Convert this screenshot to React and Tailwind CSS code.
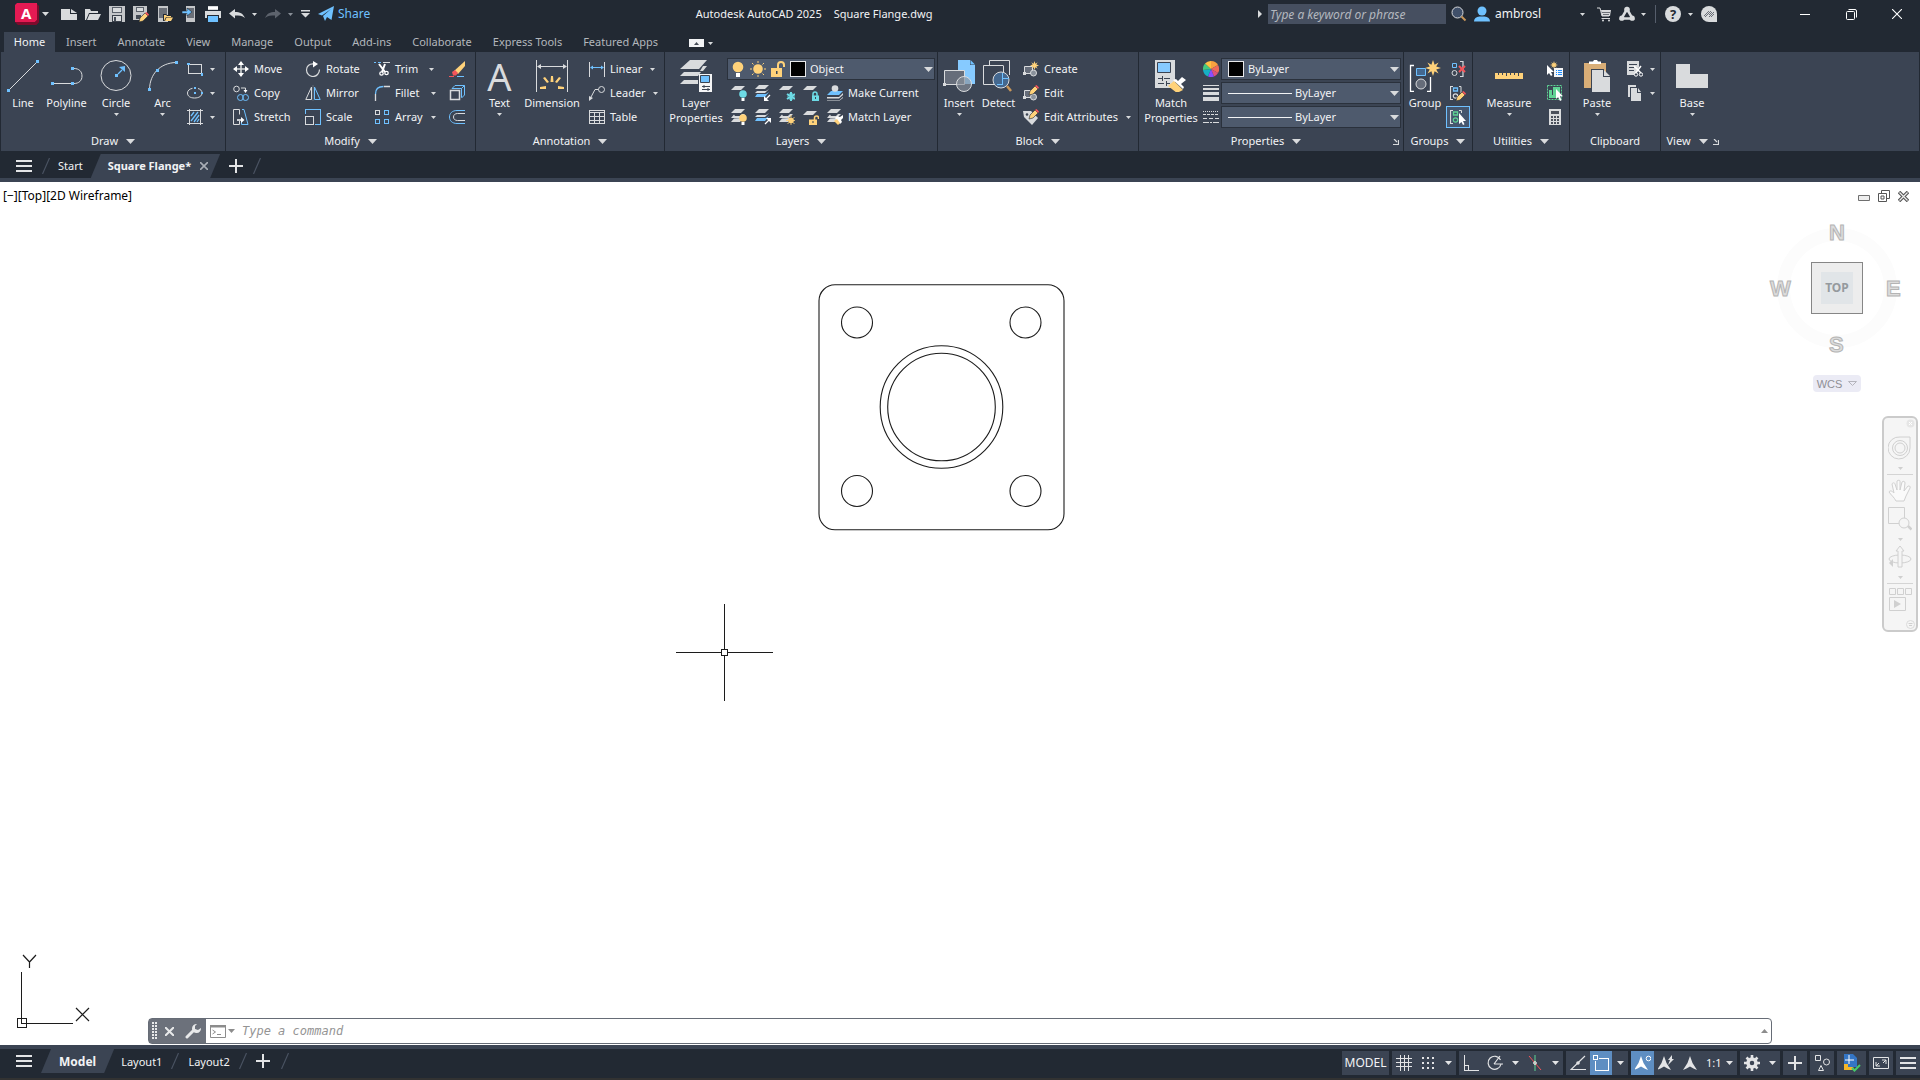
import React from "react";

const L = "#d9dbdd";
const B = "#6fc1ff";
const Y = "#ffd27a";
const C = "#6ddbe6";
const G = "#5fd394";
const R = "#f4555a";
const P = "#3b4453";
const D = "#222933";

function Ico({ w = 16, h = 16, crisp, children }) {
  return (
    <svg width={w} height={h} viewBox={`0 0 ${w} ${h}`} fill="none" stroke="none" className="shrink-0 block" shapeRendering={crisp ? "crispEdges" : undefined} aria-hidden="true">
      {children}
    </svg>
  );
}

const Tri = ({ big, up, color = L }) =>
  big ? (
    <Ico w={9} h={5}><path d={up ? "M0 5h9L4.500 0z" : "M0 0h9L4.500 5z"} fill={color} /></Ico>
  ) : (
    <Ico w={5} h={3}><path d="M0 0h5L2.500 3z" fill={color} /></Ico>
  );

/* ---------- title bar icons ---------- */
const LogoIcon = () => (
  <Ico w={24} h={22}>
    <path d="M3 22h18l3-3V3l-2-2z" fill="#7d0b2c" />
    <path d="M0 2l2-2h20v17l-2 2H0z" fill="#e51a53" />
    <path d="M0 19h20l2-2 2 2-3 3H3z" fill="#7d0b2c" />
  </Ico>
);
const NewIcon = () => <Ico w={17} h={16}><path d="M1 3h9v5h7v6H1zM11 3l6 4h-6z" fill={L} /></Ico>;
const OpenIcon = () => <Ico><path d="M0 14V3h5l1 2h7v2H4L1 14zM4.500 8H16l-3 6H2z" fill={L} /></Ico>;
const SaveIcon = () => (
  <Ico crisp>
    <path d="M0 0h16v16H0z" fill="#c4c6c9" />
    <path d="M3 1h10v6H3z" fill="#5b616b" /><path d="M4 2h8v4H4z" fill={L} />
    <path d="M3 9h10v7H3z" fill="#3b414b" /><path d="M4 10h8v5H4z" fill={L} /><path d="M5 11h2v4H5z" fill="#444b56" />
  </Ico>
);
const Pencil = ({ x = 6, y = 6 }) => (
  <g transform={`translate(${x} ${y})`}>
    <path d="M0 10l1-4 5-5 3 3-5 5z" fill={Y} stroke={D} strokeWidth=".6" />
    <path d="M6 1l1.500-1L10 2.500 9 4z" fill={R} />
  </g>
);
const SaveAsIcon = () => (
  <Ico>
    <path d="M0 0h14v7L8 14H0z" fill="#c4c6c9" /><path d="M3 1h8v5H3z" fill="#5b616b" /><path d="M4 2h6v3H4z" fill={L} /><path d="M3 9h5v4H3z" fill="#444b56" />
    <Pencil />
  </Ico>
);
const OpenMobileIcon = () => (
  <Ico><path d="M1 0h10v16H1z" fill="#c4c6c9" /><path d="M2 2h8v10H2z" fill="#6a6f78" /><path d="M6 15V8h3l1 1h5l1 6z" fill={D} /><path d="M7 15V9h2l1 1h4v1H9zM9.500 11.500H16L14 15H8z" fill={Y} /></Ico>
);
const SaveMobileIcon = () => (
  <Ico><path d="M5 0h9v16H5z" fill="#c4c6c9" /><path d="M6 2h7v10H6z" fill="#6a6f78" /><path d="M1 5h5V2l5 4-5 4V7.500H1z" fill={B} stroke={D} strokeWidth=".6" /></Ico>
);
const PrintIcon = () => (
  <Ico crisp><path d="M3 0h10v4H3zM0 5h16v7h-2V9H2v3H0z" fill={L} /><path d="M3 10h10v6H3z" fill={B} /><path d="M3 1h10v2H3z" fill="#fff" /></Ico>
);
const UndoIcon = ({ color = L }) => <Ico><path d="M0 7.500L6 3v3c5 0 8 1.500 10 6-3-2.500-6-2.500-10-2.500v3z" fill={color} /></Ico>;
const RedoIcon = () => <Ico><path d="M16 7.500L10 3v3C5 6 2 7.500 0 12c3-2.500 6-2.500 10-2.500v3z" fill="#5d636d" /></Ico>;
const CustomizeIcon = () => <Ico w={9} h={8}><path d="M0 0h9v1.500H0zM0 3h9L4.500 7.500z" fill={L} /></Ico>;
const ShareIcon = () => <Ico><path d="M0 8L16 0l-2.500 14-4.500-3L7 15l-2-5 8-7-9 6.500z" fill={B} /></Ico>;
const MagnifierIcon = () => <Ico><circle cx="6.500" cy="6.500" r="5.500" fill="#40506a" stroke={L} /><path d="M10.500 10.500L14.500 14.500" stroke="#c9975a" strokeWidth="2" /></Ico>;
const UserIcon = () => <Ico><circle cx="8" cy="5" r="4.500" fill={B} /><path d="M0 15.500c0-3 2-4.500 5.500-5h5c3.500.5 5.500 2 5.500 5z" fill={B} /></Ico>;
const CartIcon = () => <Ico w={14} h={16}><path d="M0 2h3l2 8h7" stroke={L} /><path d="M4 4h10l-1 6H5z" fill={L} /><path d="M5 6.500h8M6 8.500h6" stroke={D} strokeWidth=".6" /><path d="M4.500 12.500h8.500" stroke={L} /><circle cx="6" cy="14.500" r="1" fill={L} /><circle cx="12" cy="14.500" r="1" fill={L} /></Ico>;
const AppIcon = () => <Ico><path d="M8 3L2.500 12.500h11z" stroke={L} strokeWidth="2.500" /><circle cx="8" cy="3.500" r="2.800" fill={L} /><circle cx="2.800" cy="12.200" r="2.600" fill={L} /><circle cx="13.200" cy="12.200" r="2.600" fill={L} /></Ico>;
const HelpIcon = () => (
  <span className="flex size-4 items-center justify-center rounded-full bg-[#d9dbdd] text-[13px] font-bold leading-4 text-[#222933]">?</span>
);
const FeedbackIcon = () => <Ico><path d="M8 0a8 8 0 0 1 8 8v8H8A8 8 0 0 1 8 0z" fill={L} /><path d="M3 10l5-5M4 11l6-6M8 9l3-3M8 11l5-5M10 11l3-3" stroke="#6a6f78" /></Ico>;

/* ---------- draw / modify ---------- */
const LineIcon = () => <Ico w={32} h={32}><path d="M2 30L30 2" stroke={L} /><path d="M0 29h3v3H0zM29 0h3v3h-3z" fill={B} /></Ico>;
const PolylineIcon = () => <Ico w={32} h={32}><path d="M2 23.500h19M23 8.500c5 0 8 3 8 7.500s-3 7.500-8 7.500" stroke={L} /><path d="M0 22h3v3H0zM20 22h3v3h-3zM20 7h3v3h-3z" fill={B} /></Ico>;
const CircleIcon = () => <Ico w={32} h={32}><circle cx="16" cy="15.500" r="15" stroke={L} /><path d="M15 14h3v3h-3z" fill={B} /><path d="M18 14l4-4" stroke={B} strokeWidth="1.300" /><path d="M25 6v6l-6-5z" fill={B} /></Ico>;
const ArcIcon = () => <Ico w={32} h={32}><path d="M2.500 29C3 14 13 3 29 2.500" stroke={L} /><path d="M1 28h3v3H1zM9 9h3v3H9zM28 1h3v3h-3z" fill={B} /></Ico>;
const RectIcon = () => <Ico crisp><path d="M1.500 3.500h13v9h-13z" stroke={L} /><path d="M0 2h3v2H0zM14 12h2v3h-2z" fill={B} /></Ico>;
const EllipseIcon = () => <Ico><path d="M11 3.500c2.500.7 4 2.200 4 4.500 0 3-3 5-7.500 5S.5 11 .5 8c0-2.500 2-4 5-4.700" stroke={L} /><path d="M7 2h2v2H7zM7 7h2v2H7zM14 7h2v2h-2z" fill={B} /></Ico>;
const HatchIcon = () => <Ico><path d="M0 1.500h16M0 14.500h16M2.500 0v16M13.500 0v16" stroke={L} /><path d="M4 7l3-4M4 12l7-9M7 13l5-7M10 13l2-3" stroke={B} strokeWidth="1.300" /></Ico>;
const MoveIcon = () => <Ico><path d="M8 1v14M1 8h14" stroke={L} strokeWidth="1.500" /><path d="M8 0l3 4H5zM8 16l3-4H5zM0 8l4-3v6zM16 8l-4-3v6z" fill="#fff" /></Ico>;
const CopyIcon = () => <Ico><circle cx="3.500" cy="4" r="2.800" stroke={L} /><path d="M8 3h4.500v4" stroke={L} /><path d="M12.500 8l-2-3h4z" fill="#fff" /><circle cx="7.500" cy="12.500" r="3" stroke={B} /><circle cx="12.500" cy="12.500" r="3" stroke={B} /></Ico>;
const StretchIcon = () => <Ico><path d="M.5 .500h6v5M6.500 12v3.500h-6V.500" stroke={L} /><path d="M9 .500h2L15 15.500H8.500v-5" stroke={B} /><path d="M4 11h5" stroke="#fff" strokeWidth="1.500" /><path d="M11.500 11L8 8v6z" fill="#fff" /></Ico>;
const RotateIcon = () => <Ico><path d="M9 3C4 2.500 1.500 5.500 1.500 9c0 3.500 3 6.500 6.500 6.500s6.500-3 6.500-7" stroke={L} strokeWidth="1.200" /><path d="M8 0l5 3-5 3.500z" fill="#fff" /></Ico>;
const MirrorIcon = () => <Ico><path d="M6.500 2v12.500H.800z" stroke={L} /><path d="M9.500 2v12.500h5.700z" stroke={B} /><path d="M8 0v16" stroke="#8a919d" strokeWidth=".5" /></Ico>;
const ScaleIcon = () => <Ico crisp><path d="M.5 5V.500h15v15H10" stroke={B} /><path d="M.5 7.500h8v8h-8z" stroke={L} /></Ico>;
const TrimIcon = () => <Ico><path d="M0 1.500h2M4 1.500h3" stroke={B} /><path d="M9 1.500h7" stroke={L} /><path d="M5 3l6 8M11 3L8 11" stroke="#fff" strokeWidth="2" /><circle cx="7.500" cy="12.500" r="1.700" stroke="#fff" strokeWidth="1.300" /><circle cx="12.500" cy="12" r="1.700" stroke="#fff" strokeWidth="1.300" /></Ico>;
const FilletIcon = () => <Ico><path d="M1.500 9c0-5 3-7.500 8-7.500" stroke={B} strokeWidth="1.300" /><path d="M10 1.500h6M1.500 9v7" stroke={L} strokeWidth="1.300" /></Ico>;
const ArrayIcon = () => <Ico crisp><path d="M1.500 1.500h4v4h-4z" stroke={L} /><path d="M10.500 1.500h4v4h-4zM1.500 10.500h4v4h-4zM10.500 10.500h4v4h-4z" stroke={B} /></Ico>;
const EraseIcon = () => <Ico><path d="M5 10L16 0v5l-7 8z" fill={Y} /><path d="M3 11l3-2 3 3-2 2.500H4z" fill={R} /><path d="M0 15.500h5" stroke={R} /><path d="M8 15.500h7" stroke={B} /></Ico>;
const ExplodeIcon = () => <Ico><path d="M1.500 5.500h9v9h-9z" stroke={L} strokeWidth="1.500" /><path d="M3 3.500L6 .500h9.500V10l-3 3M12.500 3.500l3-3M12.500 3.500v9M3 3.500h9.500" stroke={B} /></Ico>;
const OffsetIcon = () => <Ico><path d="M16 1.500H8C3 1.500.5 4.500.5 8S3 14.500 8 14.500h8" stroke={B} /><path d="M16 4.500H8.500C6 4.500 4.500 6 4.500 8s1.500 3.500 4 3.500H16" stroke={L} /></Ico>;

/* ---------- annotation ---------- */
const TextIcon = () => (
  <span className="flex h-8 w-8 items-center justify-center text-[38px] font-normal leading-8 text-[#d9dbdd]">A</span>
);
const DimensionIcon = () => (
  <Ico w={32} h={32}><path d="M.5 0v32M31.500 0v32M2 6.500h28" stroke={L} /><path d="M1 6.500L5 4v5zM31 6.500L27 4v5z" fill={L} /><g fill={Y}><path d="M15 16h2l.5 6h-3zM7 18l2-1 4 5-2 1zM25 18l-2-1-4 5 2 1zM4 27l6-1v3H4zM22 26l6 1v2h-6z" /></g></Ico>
);
const LinearIcon = () => <Ico><path d="M.5 1v15M15.500 1v15" stroke={L} /><path d="M2 6.500h12" stroke={B} /><path d="M1 6.500L4 4.500v4zM15 6.500l-3-2v4z" fill={B} /></Ico>;
const LeaderIcon = () => <Ico><circle cx="12.500" cy="4.500" r="3" stroke={L} /><path d="M9.500 4.500H6L1.500 13" stroke={L} /><path d="M0 16v-5l4 2z" fill={L} /></Ico>;
const TableIcon = () => <Ico crisp><path d="M.5 1.500h15v13H.500zM0 3.500h16M0 7.500h16M0 11.500h16M5.500 4v10M10.500 4v10" stroke={L} /></Ico>;

/* ---------- layers ---------- */
const Sheet = ({ y = 0, fill = L }) => <path d={`M4 ${y}h10l-4 4H0z`} fill={fill} />;
const LayerPropsIcon = () => (
  <Ico w={32} h={32}>
    <path d="M10 0h17l-8 9H0zM4 12l-4 4h18l3-4zM4 20l-4 4h18v-4zM23 6h4l-4 5h-3z" fill={L} />
    <path d="M19 14h13v18H19z" fill="#f4f5f6" /><path d="M20.500 15.500h9v7h-9z" fill={B} stroke={P} /><path d="M22 26.500h8M22 29.500h8M24 25v3M28 28v3" stroke={P} />
  </Ico>
);
const Stack = () => <g><Sheet y={0} /><path d="M3 5.500L0 9h10l4-4h-3l-2 2H4zM3 9.500L0 13h9l3-4z" fill={L} /></g>;
const Bulb = ({ c }) => <g><circle cx="12" cy="9" r="3.800" fill={c} /><path d="M10.500 13h3v3h-3z" fill="#fff" /></g>;
const LayOff = () => <Ico><Sheet y={1} /><Bulb c={C} /></Ico>;
const LayOn = () => <Ico><Stack /><Bulb c={Y} /></Ico>;
const Iso = ({ flip }) => (
  <Ico><Sheet y={0} /><path d="M2 6h9l3-2-4 4H0z" fill={L} /><path d="M2 9h9l3-2-4 5H0z" fill={B} /><path d="M10 15l5-5" stroke="#fff" strokeWidth="1.300" />{flip ? <path d="M16 9v5l-5-5z" fill="#fff" /> : <path d="M9 16v-5l5 5z" fill="#fff" />}</Ico>
);
const Freeze = () => <Ico><Sheet y={1} /><path d="M12 7v9M8 9l8 5M16 9l-8 5" stroke={C} strokeWidth="2" /><circle cx="12" cy="11.500" r="3" stroke={C} /></Ico>;
const Thaw = () => <Ico><Stack /><path d="M12 6v11M7 11.500h10M8.500 8l7 7M15.500 8l-7 7" stroke={Y} strokeWidth=".8" /><circle cx="12" cy="11.500" r="2.800" fill={Y} /></Ico>;
const Lock = () => <Ico><Sheet y={1} /><path d="M10 11V9a2 2 0 0 1 4 0v2" stroke={C} strokeWidth="1.500" /><path d="M9 10.500h7V16H9z" fill={C} /><path d="M12 12h1v2h-1z" fill={P} /></Ico>;
const Unlock = () => <Ico><Sheet y={2} /><path d="M11.500 11V9a2 2 0 0 1 4 0v1" stroke={Y} strokeWidth="1.500" /><path d="M6 10.500h8V16H6z" fill={Y} /><path d="M9.500 12h1v2h-1z" fill={P} /></Ico>;
const MakeCurrentIcon = () => <Ico><path d="M4 6h12l-4 4H0z" fill={B} /><circle cx="8" cy="3.500" r="3.300" fill={L} /><path d="M0 12h12l4-4v2l-4 3.500H0zM0 15.500h12l4-3.500v1l-4 3H0z" fill={L} /></Ico>;
const MatchLayerIcon = () => <Ico><Stack /><path d="M8 9l2-2 3 1 3-2v3l-2 2 1 2-2 2z" fill="#fff" /><path d="M7 12l3-2 3 4-2 2z" fill={Y} /></Ico>;
const BulbOn = () => <Ico><circle cx="8" cy="6" r="5.300" fill={Y} /><path d="M6 12h4v4H6z" fill="#fff" /></Ico>;
const SunIcon = () => <Ico><circle cx="8" cy="8" r="4.800" fill={Y} /><path d="M8 0v2M8 14v2M0 8h2M14 8h2M2 2l1.500 1.500M12.500 12.500L14 14M14 2l-1.500 1.500M3.500 12.500L2 14" stroke={Y} /></Ico>;
const UnlockBig = () => <Ico><path d="M9 8V4a3 3 0 0 1 6 0v2" stroke={Y} strokeWidth="2" transform="translate(-1 0)" /><path d="M1 7h11v9H1z" fill={Y} /><path d="M6 10h1.500v3H6z" fill={P} /></Ico>;

/* ---------- block ---------- */
const InsertIcon = () => <Ico w={32} h={32}><path d="M15 0h12v5h5v19H15z" fill="#86caff" /><path d="M27.500 0L32 4.500h-4.500z" fill={B} /><path d="M1.500 10.500h20v14h-20z" fill="#666d7a" stroke={L} /><circle cx="21" cy="24" r="7.500" fill="#8a929c" fillOpacity=".65" stroke={L} /><path d="M0 23h3v3H0z" fill={L} /></Ico>;
const DetectIcon = () => <Ico w={32} h={32}><path d="M6.500 5V.500h20V15M.5 5.500h20M20.500 6v6M.5 5.500v19H12" stroke={L} /><circle cx="18" cy="20" r="8" fill="#44688f" stroke={L} /><path d="M19.500 13v12M20 18.500h6M14 24.500h6" stroke={B} /><path d="M24 26l4 5" stroke="#c9975a" strokeWidth="2.500" /></Ico>;
const BlockBase = () => <g><path d="M1.500 5.500h8v7h-8z" fill="#666d7a" stroke={L} /><path d="M0 11h3v3H0z" fill={L} /><circle cx="10.500" cy="12" r="3" fill="#8a929c" stroke={L} /></g>;
const Star = ({ x, y, r = 5 }) => <path transform={`translate(${x} ${y}) scale(${r / 5})`} d="M0-5L1-2 3.500-3.500 2-1 5 0 2 1 3.500 3.500 1 2 0 5-1 2-3.500 3.500-2 1-5 0-2-1-3.500-3.500-1-2z" fill={Y} />;
const CreateIcon = () => <Ico><BlockBase /><Star x={11.5} y={4.5} r={4.5} /></Ico>;
const EditIcon = () => <Ico><BlockBase /><Pencil x={6} y={0} /></Ico>;
const EditAttrIcon = () => <Ico><path d="M0 2h8l7 7-6 7-8-8z" fill={L} /><circle cx="4" cy="5.500" r="1.300" fill={P} /><Pencil x={6} y={0} /></Ico>;

/* ---------- properties ---------- */
const MatchPropsIcon = () => <Ico w={32} h={32}><path d="M0 0h20v28H0z" fill={L} /><path d="M2.500 2.500h13v10h-13z" fill="#86caff" stroke={P} /><path d="M3 18.500h4M9 18.500h6M3 23.500h6M11 23.500h4M7.500 16v5M11.500 21v5" stroke={P} /><path d="M13 26l6-5 9 9-6 3z" fill={Y} /><path d="M18 20l3-1 2 2 4-4 4 3-5 4 3 3-1 2z" fill="#fff" /></Ico>;
const ColorWheel = () => (
  <Ico>
    <path d="M8 8V0a8 8 0 0 1 7 4z" fill="#f8a13f" /><path d="M8 8L15 4a8 8 0 0 1 0 8z" fill="#ef6a5a" /><path d="M8 8l7 4a8 8 0 0 1-4 3.500z" fill="#e0527d" />
    <path d="M8 8l3 7.500a8 8 0 0 1-6 0z" fill="#8a4dff" /><path d="M8 8l-3 7.500A8 8 0 0 1 0 9z" fill="#16b0c4" /><path d="M8 8L0 9a8 8 0 0 1 2-6.500z" fill="#45c97e" /><path d="M8 8L2 2.500A8 8 0 0 1 8 0z" fill="#ffc043" />
  </Ico>
);
const LineWeightIcon = () => <Ico crisp><path d="M0 0h16v1H0zM0 3h16v2H0zM0 7h16v3H0zM0 12h16v4H0z" fill={L} /></Ico>;
const LineTypeIcon = () => <Ico crisp><path d="M0 2.500h16" stroke={L} strokeDasharray="1 1" /><path d="M0 5.500h16" stroke={L} strokeDasharray="3 1" /><path d="M0 9.500h16" stroke={L} strokeDasharray="4 2" /><path d="M0 13.500h16" stroke={L} strokeDasharray="6 1 2 1" /></Ico>;
const Launcher = () => <Ico w={6} h={6}><path d="M1 0l3 3M0 5.500h5.500V1" stroke={L} strokeWidth="1.200" /></Ico>;

/* ---------- groups / utilities / clipboard / view ---------- */
const GroupIcon = () => <Ico w={32} h={32}><path d="M5 5.500H1.500v26H5M18 31.500h3.500V17" stroke="#fff" strokeWidth="1.300" /><path d="M7.500 8.500h9v7h-9z" fill="#44688f" stroke={B} /><circle cx="12" cy="24" r="5" fill="#666d7a" stroke={L} /><Star x={24} y={8} r={8} /></Ico>;
const Grp = ({ c = B, o = L }) => <g><path d="M3 1.500H.5v13H3" stroke={L} strokeWidth="1.200" /><path d="M3.500 3h4v3h-4z" stroke={c} strokeWidth="1.300" /><circle cx="5.500" cy="11" r="2.200" stroke={o} strokeWidth="1.200" /></g>;
const UngroupIcon = () => <Ico><path d="M10 .500h3v15h-3" stroke={L} strokeWidth="1.200" /><path d="M2.500 2.500h4v4h-4z" stroke={B} /><circle cx="4.500" cy="12" r="2.500" stroke={L} /><path d="M9 5l6 6M15 5l-6 6" stroke={R} strokeWidth="2" /></Ico>;
const GroupEditIcon = () => <Ico><Grp /><path d="M9 1.500h2V8" stroke={L} /><Pencil x={6} y={6} /></Ico>;
const GroupSelIcon = () => <Ico><Grp c={G} o={G} /><path d="M9 1.500h2.500V4" stroke={L} /><path d="M9 4v11l2.500-2 1.500 3 1.500-.8L13 12h3z" fill="#fff" /></Ico>;
const RulerIcon = () => <Ico w={32} h={32} crisp><path d="M2 13h28v6H2z" fill={Y} /><path d="M5.500 13v2M9.500 13v2M13.500 13v3M17.500 13v2M21.500 13v2M25.500 13v3" stroke={P} /></Ico>;
const QuickSelIcon = () => <Ico><Star x={7} y={4} r={4} /><path d="M0 4v10l2-2 2 3 1.500-1L4 11h3z" fill="#fff" /><path d="M7 7h9v9H7z" fill="#f4f5f6" /><path d="M9 9.500h1M11 9.500h4M9 11.500h1M11 11.500h4M9 13.500h1M11 13.500h4" stroke="#1b8cff" /></Ico>;
const SelAllIcon = () => <Ico><path d="M.5 .500h14v14H.500z" stroke={G} strokeDasharray="2 1" /><path d="M2 5h3v5h6v3H2zM6 2h7v8H6z" fill={G} /><path d="M9 4v10l2-2 2 4 1.500-.8-1.500-4h3z" fill="#fff" /></Ico>;
const CalcIcon = () => <Ico crisp><path d="M2 0h12v16H2z" fill={L} /><path d="M4 2h8v3H4zM4 7h2v2H4zM7 7h2v2H7zM10 7h2v2h-2zM4 10h2v2H4zM7 10h2v2H7zM10 10h2v2h-2zM4 13h2v2H4zM7 13h2v2H7zM10 13h2v2h-2z" fill="#4a505b" /></Ico>;
const PasteIcon = () => <Ico w={28} h={32}><path d="M1 3h22v25H1z" fill="#d9ae77" /><path d="M6 4V1.500h4L11 0h3l1 1.500h3V4z" fill="#fff" /><path d="M8 9h13v7h7v16H8z" fill={P} /><path d="M9 10h11v7h7v15H9zM21 10l6 6h-6z" fill={L} /></Ico>;
const CutIcon = () => <Ico><path d="M0 0h12v6l-4 8H0z" fill={L} /><path d="M2 3.500h8M2 6.500h5M2 9.500h5" stroke={P} /><path d="M7 5l7 7M14 5l-6 8" stroke="#fff" strokeWidth="1.500" /><circle cx="9" cy="13.500" r="1.700" stroke="#fff" fill={P} /><circle cx="14" cy="13.500" r="1.700" stroke="#fff" fill={P} /></Ico>;
const CopyClipIcon = () => <Ico><path d="M1 0h8v2H3v10H1z" fill={L} /><path d="M4 3h6v5h4v8H4zM11 3l3 4h-3z" fill={L} /></Ico>;
const BaseIcon = () => <Ico w={32} h={32} crisp><path d="M0 4h14v10h18v14H0z" fill={L} /></Ico>;

/* ---------- building blocks ---------- */
function Big({ icon, label, label2, drop, className }) {
  return (
    <button className={`flex shrink-0 flex-col items-center pt-[3px] leading-[15px] ${className}`}>
      {icon}
      <span className="mt-[3px] whitespace-nowrap">{label}</span>
      {label2 && <span className="whitespace-nowrap">{label2}</span>}
      {drop && <span className="mt-[3px]"><Tri /></span>}
    </button>
  );
}
function Small({ icon, label, drop, className = "" }) {
  return (
    <button className={`flex h-6 items-center ${className}`} aria-label={label}>
      {icon}
      <span className="ml-[5px] flex-1 whitespace-nowrap text-left">{label}</span>
      {drop && <Tri />}
    </button>
  );
}
function IconBtn({ icon, name, drop, className = "" }) {
  return (
    <button aria-label={name} className={`flex h-6 items-center gap-[7px] ${className}`}>
      {icon}
      {drop && <Tri />}
    </button>
  );
}
function Panel({ title, drop = true, launcher, className, children }) {
  return (
    <section className={`flex shrink-0 flex-col border-r border-[#222933] pt-[5px] ${className}`} aria-label={title}>
      <div className="flex h-[72px]">{children}</div>
      <div className="flex flex-1 items-center pt-[2px]">
        <button className="flex flex-1 items-center justify-center gap-2 whitespace-nowrap">
          {title}
          {drop && <Tri big />}
        </button>
        {launcher && <button className="mr-1 pt-[2px]" aria-label={`${title} settings`}><Launcher /></button>}
      </div>
    </section>
  );
}
function Combo({ name, value, lead, pad = "pl-[6px]" }) {
  return (
    <label className={`flex h-[22px] items-center border border-[#2a313c] bg-[#4e5a6d] pr-[1px] ${pad}`}>
      {lead}
      <select aria-label={name} className="h-5 min-w-0 flex-1 appearance-none bg-transparent text-[#f2f3f5] outline-none" defaultValue={value}>
        <option>{value}</option>
      </select>
      <Tri big />
    </label>
  );
}

const Swatch = () => <span className="size-4 shrink-0 border border-[#e8e9eb] bg-black" />;

function TitleBar() {
  return (
    <header className="flex h-7 items-center">
      <div className="flex items-center">
        <button aria-label="Application menu" className="relative ml-[15px] flex items-center gap-[3px]">
          <LogoIcon />
          <span className="absolute left-[6px] top-0 text-[15px] font-bold leading-5 text-white">A</span>
          <Ico w={7} h={4}><path d="M0 0h7L3.500 4z" fill={L} /></Ico>
        </button>
        <div className="ml-[11px] flex items-center gap-2">
          <button aria-label="New"><NewIcon /></button>
          <button aria-label="Open"><OpenIcon /></button>
          <button aria-label="Save"><SaveIcon /></button>
          <button aria-label="Save as"><SaveAsIcon /></button>
          <button aria-label="Open from web and mobile"><OpenMobileIcon /></button>
          <button aria-label="Save to web and mobile"><SaveMobileIcon /></button>
          <button aria-label="Plot"><PrintIcon /></button>
          <button aria-label="Undo" className="flex items-center gap-[7px]"><UndoIcon /><Tri /></button>
          <button aria-label="Redo" className="flex items-center gap-[7px]"><RedoIcon /><Tri color="#8a9099" /></button>
          <button aria-label="Customize toolbar"><CustomizeIcon /></button>
        </div>
        <button className="ml-2 flex items-center gap-1 text-[12px] text-[#6fc1ff]"><ShareIcon />Share</button>
      </div>
      <h1 className="flex flex-1 justify-center gap-3 whitespace-nowrap text-[#f2f3f5]">
        <span>Autodesk AutoCAD 2025</span>
        <span>Square Flange.dwg</span>
      </h1>
      <div className="flex items-center">
        <Ico w={4} h={8}><path d="M0 0v8l4-4z" fill={L} /></Ico>
        <input aria-label="Search" placeholder="Type a keyword or phrase" className="ml-[6px] h-5 w-[178px] bg-[#464f60] pl-[2px] text-[12px] italic text-white placeholder:text-[#b4b8bf] outline-none" />
        <button aria-label="Find" className="ml-[5px]"><MagnifierIcon /></button>
        <button className="ml-[7px] flex w-[111px] items-center gap-[5px] text-[12px] text-[#f2f3f5]"><UserIcon /><span className="flex-1 text-left">ambrosl</span><Tri /></button>
        <button aria-label="Store" className="ml-3"><CartIcon /></button>
        <button aria-label="Autodesk apps" className="ml-2 flex items-center gap-[6px]"><AppIcon /><Tri /></button>
        <span className="ml-[9px] h-[18px] w-px bg-[#565e6c]" />
        <button aria-label="Help" className="ml-[9px] flex items-center gap-[7px]"><HelpIcon /><Tri /></button>
        <button aria-label="Feedback" className="ml-2"><FeedbackIcon /></button>
        <button aria-label="Minimize" className="ml-[65px] flex w-[46px] justify-center"><Ico w={10} h={10} crisp><path d="M0 5h10v1H0z" fill="#fff" /></Ico></button>
        <button aria-label="Restore" className="flex w-[46px] justify-center"><Ico w={11} h={11}><rect x=".5" y="2.500" width="8" height="8" rx="1" stroke="#fff" /><path d="M2.500 .500H9A1.500 1.500 0 0 1 10.500 2v6.500" stroke="#fff" /></Ico></button>
        <button aria-label="Close" className="flex w-[46px] justify-center"><Ico w={10} h={10}><path d="M0 0l10 10M10 0L0 10" stroke="#fff" strokeWidth="1.100" /></Ico></button>
      </div>
    </header>
  );
}

const TABS = ["Insert", "Annotate", "View", "Manage", "Output", "Add-ins", "Collaborate", "Express Tools", "Featured Apps"];

function RibbonTabs() {
  return (
    <nav className="flex h-6 items-end pl-1 text-[#b3b7bc]">
      <button className="h-5 w-[51px] bg-[#3b4453] text-center text-[#f2f3f5]">Home</button>
      <div className="ml-[11px] flex h-5 items-center gap-[21px]">
        {TABS.map((t) => <button key={t} className="whitespace-nowrap">{t}</button>)}
      </div>
      <button aria-label="Minimize ribbon" className="ml-[31px] flex h-5 items-center gap-1 pt-[2px]">
        <span className="flex h-2 w-[15px] items-center justify-center bg-[#f2f3f5]"><Ico w={5} h={3}><path d="M0 3h5L2.500 0z" fill="#444b56" /></Ico></span>
        <Tri />
      </button>
    </nav>
  );
}

function Ribbon() {
  return (
    <div className="mx-px flex h-[99px] shrink-0 bg-[#3b4453] text-[#f2f3f5]">
      <Panel title="Draw" className="w-[225px]">
        <Big icon={<LineIcon />} label="Line" className="w-11" />
        <Big icon={<PolylineIcon />} label="Polyline" className="w-[43px]" />
        <Big icon={<CircleIcon />} label="Circle" drop className="w-[56px]" />
        <Big icon={<ArcIcon />} label="Arc" drop className="w-[37px]" />
        <div className="ml-[6px]">
          <IconBtn icon={<RectIcon />} name="Rectangle" drop />
          <IconBtn icon={<EllipseIcon />} name="Ellipse" drop />
          <IconBtn icon={<HatchIcon />} name="Hatch" drop />
        </div>
      </Panel>
      <Panel title="Modify" className="w-[250px] [&>div:first-child]:pl-[7px]">
        <div className="w-[72px]">
          <Small icon={<MoveIcon />} label="Move" />
          <Small icon={<CopyIcon />} label="Copy" />
          <Small icon={<StretchIcon />} label="Stretch" />
        </div>
        <div className="w-[69px]">
          <Small icon={<RotateIcon />} label="Rotate" />
          <Small icon={<MirrorIcon />} label="Mirror" />
          <Small icon={<ScaleIcon />} label="Scale" />
        </div>
        <div className="w-[75px]">
          <Small icon={<TrimIcon />} label="Trim" drop className="w-[60px]" />
          <Small icon={<FilletIcon />} label="Fillet" drop className="w-[62px]" />
          <Small icon={<ArrayIcon />} label="Array" drop className="w-[62px]" />
        </div>
        <div>
          <IconBtn icon={<EraseIcon />} name="Erase" />
          <IconBtn icon={<ExplodeIcon />} name="Explode" />
          <IconBtn icon={<OffsetIcon />} name="Offset" />
        </div>
      </Panel>
      <Panel title="Annotation" className="w-[189px]">
        <Big icon={<TextIcon />} label="Text" drop className="w-[47px]" />
        <Big icon={<DimensionIcon />} label="Dimension" className="w-[58px]" />
        <div className="ml-2">
          <Small icon={<LinearIcon />} label="Linear" drop className="w-[66px]" />
          <Small icon={<LeaderIcon />} label="Leader" drop className="w-[69px]" />
          <Small icon={<TableIcon />} label="Table" />
        </div>
      </Panel>
      <Panel title="Layers" className="w-[273px]">
        <Big icon={<LayerPropsIcon />} label="Layer" label2="Properties" className="w-[62px]" />
        <div className="mr-[2px] flex-1">
          <div className="flex h-6 flex-col justify-center">
            <Combo name="Layer" value="Object" pad="pl-[2px]" lead={<span className="mr-[4px] flex items-center gap-1"><BulbOn /><SunIcon /><UnlockBig /><Swatch /></span>} />
          </div>
          <div className="flex gap-2 pl-1">
            <IconBtn icon={<LayOff />} name="Layer off" />
            <IconBtn icon={<Iso />} name="Isolate layer" />
            <IconBtn icon={<Freeze />} name="Freeze layer" />
            <IconBtn icon={<Lock />} name="Lock layer" />
            <Small icon={<MakeCurrentIcon />} label="Make Current" />
          </div>
          <div className="flex gap-2 pl-1">
            <IconBtn icon={<LayOn />} name="Turn all layers on" />
            <IconBtn icon={<Iso flip />} name="Unisolate layer" />
            <IconBtn icon={<Thaw />} name="Thaw all layers" />
            <IconBtn icon={<Unlock />} name="Unlock layer" />
            <Small icon={<MatchLayerIcon />} label="Match Layer" />
          </div>
        </div>
      </Panel>
      <Panel title="Block" className="w-[201px]">
        <Big icon={<InsertIcon />} label="Insert" drop className="w-[42px]" />
        <Big icon={<DetectIcon />} label="Detect" className="w-[37px]" />
        <div className="ml-[6px]">
          <Small icon={<CreateIcon />} label="Create" />
          <Small icon={<EditIcon />} label="Edit" />
          <Small icon={<EditAttrIcon />} label="Edit Attributes" drop className="w-[108px]" />
        </div>
      </Panel>
      <Panel title="Properties" launcher className="w-[265px]">
        <Big icon={<MatchPropsIcon />} label="Match" label2="Properties" className="w-16" />
        <div className="w-[18px]">
          <IconBtn icon={<ColorWheel />} name="Color" />
          <IconBtn icon={<LineWeightIcon />} name="Lineweight" />
          <IconBtn icon={<LineTypeIcon />} name="Linetype" />
        </div>
        <div className="mr-[2px] flex flex-1 flex-col justify-around">
          <Combo name="Object color" value="ByLayer" lead={<span className="mr-1 flex"><Swatch /></span>} />
          <Combo name="Object lineweight" value="ByLayer" lead={<span className="mr-[3px] h-px w-16 bg-[#f2f3f5]" />} />
          <Combo name="Object linetype" value="ByLayer" lead={<span className="mr-[3px] h-px w-16 bg-[#f2f3f5]" />} />
        </div>
      </Panel>
      <Panel title="Groups" className="w-[69px]">
        <Big icon={<GroupIcon />} label="Group" className="w-[42px]" />
        <div className="flex flex-col items-center">
          <IconBtn icon={<UngroupIcon />} name="Ungroup" />
          <IconBtn icon={<GroupEditIcon />} name="Group edit" />
          <button aria-label="Group selection" aria-pressed="true" className="mt-px flex h-[22px] w-6 items-center justify-center border border-[#6fc1ff] bg-[#45566e]"><GroupSelIcon /></button>
        </div>
      </Panel>
      <Panel title="Utilities" className="w-[97px]">
        <Big icon={<RulerIcon />} label="Measure" drop className="w-[72px]" />
        <div className="ml-[2px]">
          <IconBtn icon={<QuickSelIcon />} name="Quick select" />
          <IconBtn icon={<SelAllIcon />} name="Select all" />
          <IconBtn icon={<CalcIcon />} name="Quick calculator" />
        </div>
      </Panel>
      <Panel title="Clipboard" drop={false} className="w-[91px]">
        <Big icon={<PasteIcon />} label="Paste" drop className="w-[54px]" />
        <div className="ml-[3px]">
          <IconBtn icon={<CutIcon />} name="Cut" drop />
          <IconBtn icon={<CopyClipIcon />} name="Copy clip" drop />
        </div>
      </Panel>
      <Panel title="View" launcher className="w-[62px] border-r-0">
        <Big icon={<BaseIcon />} label="Base" drop className="w-[62px]" />
      </Panel>
    </div>
  );
}

const Menu = () => <Ico w={16} h={12} crisp><path d="M0 0h16v2H0zM0 5h16v2H0zM0 10h16v2H0z" fill="#e3e4e6" /></Ico>;
const PlusIcon = () => <Ico w={14} h={14} crisp><path d="M6 0h2v14H6zM0 6h14v2H0z" fill="#e3e4e6" /></Ico>;
const Slash = () => <Ico w={8} h={16}><path d="M7.500 0L.5 16" stroke="#4a5362" strokeWidth="1.200" /></Ico>;

const tabShape = "[clip-path:polygon(10px_0,100%_0,calc(100%-10px)_100%,0_100%)]";

function FileTabs() {
  return (
    <div className="flex h-[27px] shrink-0 items-end text-[#f2f3f5]">
      <div className="flex h-6 items-center">
        <button aria-label="File menu" className="ml-4"><Menu /></button>
        <span className="ml-[10px]"><Slash /></span>
        <button className="ml-2">Start</button>
        <div className={`ml-2 flex h-6 items-center bg-[#3b4453] pl-[17px] pr-3 font-bold ${tabShape}`}>
          <button className="whitespace-nowrap">Square Flange*</button>
          <button aria-label="Close drawing" className="ml-[9px]"><Ico w={8} h={8}><path d="M0 0l8 8M8 0L0 8" stroke="#a9aeb6" strokeWidth="1.600" /></Ico></button>
        </div>
        <button aria-label="New drawing" className="ml-[9px]"><PlusIcon /></button>
        <span className="ml-[10px]"><Slash /></span>
      </div>
    </div>
  );
}

/* ---------- drawing area ---------- */
const Flange = () => (
  <svg width="247" height="247" viewBox="0 0 247 247" fill="none" stroke="#1c1c1c" strokeWidth="1.100" className="absolute left-[818px] top-[102px]" aria-label="Square flange">
    <rect x="1" y=".8" width="245" height="245" rx="16" />
    <circle cx="39" cy="38.500" r="15.500" /><circle cx="207.500" cy="38.500" r="15.500" /><circle cx="39" cy="207" r="15.500" /><circle cx="207.500" cy="207" r="15.500" />
    <circle cx="123.500" cy="123" r="61.300" /><circle cx="123.500" cy="123" r="53.800" />
  </svg>
);
const Crosshair = () => (
  <svg width="97" height="97" viewBox="0 0 97 97" fill="none" stroke="#1c1c1c" shapeRendering="crispEdges" className="absolute left-[676px] top-[422px]" aria-hidden="true">
    <path d="M48.500 0v45M48.500 52v45M0 48.500h45M52 48.500h45" />
    <path d="M45.500 45.500h6v6h-6z" />
  </svg>
);
const Ucs = () => (
  <svg width="76" height="76" viewBox="0 0 76 76" fill="none" stroke="#1c1c1c" className="absolute bottom-[17px] left-4" aria-hidden="true">
    <path d="M5.500 20v51h51M1.500 66.500h9v9h-9z" shapeRendering="crispEdges" />
    <path d="M7 3l6.500 7L20 3M13.500 10v6M60 56l13 13M73 56L60 69" strokeWidth="1.200" />
  </svg>
);

const compassLetter = "absolute font-['Liberation_Sans',sans-serif] text-[22px] font-bold leading-6 text-[#dcdcdc] [-webkit-text-stroke:1px_#b4b4b4]";

function ViewCube() {
  return (
    <div className="absolute right-[23px] top-[46px] h-[170px] w-[120px]">
      <div className="absolute left-0 top-0 size-[120px] rounded-full border-[13px] border-[#fcfcfc]" />
      <button className={`${compassLetter} left-[52px] top-[-7px]`}>N</button>
      <button className={`${compassLetter} left-[-7px] top-[49px]`}>W</button>
      <button className={`${compassLetter} left-[109px] top-[49px]`}>E</button>
      <button className={`${compassLetter} left-[52px] top-[105px]`}>S</button>
      <button className="absolute left-[34px] top-[34px] flex size-[52px] items-center justify-center border border-[#868686] bg-[#ededed]">
        <span className="flex size-8 items-center justify-center bg-[#e1e5e8] text-[12px] font-bold text-[#959a9e]">TOP</span>
      </button>
      <button className="absolute left-[36px] top-[147px] flex h-[17px] w-[48px] items-center justify-center gap-[6px] rounded bg-[#ebebf5] font-['Liberation_Sans',sans-serif] text-[11px] text-[#8f8f96]">
        WCS<Ico w={9} h={5}><path d="M.5 .500h8l-4 4z" stroke="#b4b4bc" /></Ico>
      </button>
    </div>
  );
}

function NavBar() {
  const s = { stroke: "#d0d0d0" };
  return (
    <div className="absolute right-[2px] top-[234px] flex h-[216px] w-9 flex-col items-center rounded-md border-2 border-[#cbcbcb] bg-[#f5f5f5]">
      <button aria-label="Close navigation bar" className="mr-[1px] mt-[1px] self-end"><Ico w={9} h={9}><circle cx="4.500" cy="4.500" r="4" fill="#e6e6e6" /><path d="M3 3l3 3M6 3L3 6" stroke="#fff" /></Ico></button>
      <button aria-label="Navigation wheel" className="mt-[8px]"><Ico w={24} h={24}><path d="M12 1h10v11a11 11 0 1 1-10-11z" {...s} /><circle cx="12" cy="12" r="7.500" {...s} /><circle cx="12" cy="12" r="5" {...s} /></Ico></button>
      <span className="mt-[7px]"><Tri color="#cfcfcf" /></span>
      <span className="mt-[4px] h-px w-[26px] bg-[#d4d4d4]" />
      <button aria-label="Pan" className="mt-1"><Ico w={24} h={24}><path d="M8 22c-2-4-5-6-7-9 1-2 3-1 5 1L4 5c1-2 3-1 3 0l2 6V2c1-1 3-1 3 0v9l2-8c1-1 3-1 3 1l-1 8 4-5c1 0 3 0 2 2l-4 8-2 5z" fill="#fafafa" {...s} /></Ico></button>
      <button aria-label="Zoom" className="mt-1"><Ico w={24} h={24}><path d="M.5 .500h16v16H.500z" {...s} /><circle cx="16" cy="16" r="5" fill="#f5f5f5" {...s} /><path d="M20 19l3.500 3.500" stroke="#d0d0d0" strokeWidth="2.500" /></Ico></button>
      <span className="mt-[7px]"><Tri color="#cfcfcf" /></span>
      <button aria-label="Orbit" className="mt-1"><Ico w={24} h={24}><ellipse cx="12" cy="14" rx="11" ry="4" {...s} /><path d="M12 1l4 5h-2v16h-4V6H8z" fill="#f5f5f5" {...s} /><path d="M5 14v8l-4-4z" fill="#d0d0d0" /></Ico></button>
      <span className="mt-[7px]"><Tri color="#cfcfcf" /></span>
      <span className="mt-1 h-px w-[26px] bg-[#d4d4d4]" />
      <button aria-label="Show motion" className="mt-1"><Ico w={24} h={24}><path d="M1.500 .500h6v6h-6zM9.500 .500h6v6h-6zM17.500 .500h6v6h-6zM1.500 9.500h16v13h-16z" {...s} /><path d="M6 12v8l7-4z" fill="#d0d0d0" /></Ico></button>
      <button aria-label="Navigation options" className="mb-[1px] mr-[1px] mt-auto self-end"><Ico w={9} h={9}><circle cx="4.500" cy="4.500" r="4" stroke="#dadada" /><path d="M2.500 3.500h4M3 5.500h3" stroke="#d0d0d0" /></Ico></button>
    </div>
  );
}

function Canvas() {
  return (
    <main className="relative flex-1 overflow-hidden bg-white">
      <div className="flex justify-between pl-[3px] pr-2 pt-[5px]">
        <button className="h-[18px] whitespace-nowrap text-[12px] leading-[18px] text-black">[−][Top][2D Wireframe]</button>
        <div className="flex items-center gap-2 pr-[3px]">
          <button aria-label="Minimize drawing" className="pt-1"><Ico w={12} h={6}><path d="M.5 .500h11v5H.500z" fill="#eee" stroke="#6f6f6f" /></Ico></button>
          <button aria-label="Restore drawing"><Ico w={12} h={12}><path d="M3.500 3V.500h8v8H9M.5 3.500h8v8h-8z" stroke="#555" /><path d="M3 6h3v3H3z" stroke="#555" /></Ico></button>
          <button aria-label="Close drawing window"><Ico w={11} h={11}><path d="M1 1l9 9M10 1l-9 9" stroke="#555" strokeWidth="3.500" /><path d="M1.500 1.500l8 8M9.500 1.500l-8 8" stroke="#eee" strokeWidth="1.200" /></Ico></button>
        </div>
      </div>
      <Flange />
      <Crosshair />
      <Ucs />
      <ViewCube />
      <NavBar />
      <div className="absolute bottom-[1px] left-[148px] right-[148px] flex h-[26px] rounded-sm border border-[#666c76] bg-white">
        <div className="flex w-[57px] items-center bg-[#6c717b] pl-[3px]">
          <Ico w={6} h={18} crisp>{[0, 3, 6, 9, 12, 15].map((y) => <path key={y} d={`M0 ${y}h2v2H0zM3 ${y}h2v2H3z`} fill="#e8e9ea" />)}</Ico>
          <button aria-label="Close command line" className="ml-[7px]"><Ico w={9} h={9}><path d="M0 0l9 9M9 0L0 9" stroke="#e8e9ea" strokeWidth="2" /></Ico></button>
          <button aria-label="Customize command line" className="ml-[11px]"><Ico w={16} h={16}><path d="M2 14l7-7" stroke="#e8e9ea" strokeWidth="3" strokeLinecap="round" /><path d="M12 1a4.500 4.500 0 1 0 4 4l-3 2-3-1 0-3z" fill="#e8e9ea" /></Ico></button>
        </div>
        <button aria-label="Recent commands" className="ml-1 flex items-center gap-[2px]">
          <Ico w={16} h={13}><path d="M.5 .500h15v12H.500z" stroke="#8c8c8c" /><path d="M0 0h16v2.500H0z" fill="#8c8c8c" /><path d="M2.500 5l3 2-3 2M7 9.500h4" stroke="#8c8c8c" /></Ico>
          <Ico w={7} h={4}><path d="M0 0h7L3.500 4z" fill="#8c8c8c" /></Ico>
        </button>
        <input aria-label="Command" placeholder="Type a command" className="ml-[7px] min-w-0 flex-1 bg-transparent font-['DejaVu_Sans_Mono',monospace] text-[12px] italic text-black outline-none placeholder:text-[#949494]" />
        <button aria-label="Command history" className="mr-[3px]"><Ico w={7} h={4}><path d="M0 4h7L3.500 0z" fill="#8c8c8c" /></Ico></button>
      </div>
    </main>
  );
}

/* ---------- status bar ---------- */
const W = "#e3e4e6";
const AnnoA = ({ c = W }) => <path d="M8 1l2.500 7 4.500 7-3.500-1.500L8 11.500 4.500 13.500 1 15l4.500-7z" fill={c} />;
const stat = {
  grid: <Ico crisp><path d="M4.500 0v16M8.500 0v16M12.500 0v16M0 3.500h16M0 7.500h16M0 11.500h16" stroke={W} /></Ico>,
  snap: <Ico crisp><path d="M2 2h2v2H2zM7 2h2v2H7zM12 2h2v2h-2zM2 7h2v2H2zM7 7h2v2H7zM12 7h2v2h-2zM2 12h2v2H2zM7 12h2v2H7zM12 12h2v2h-2z" fill={W} /></Ico>,
  ortho: <Ico crisp><path d="M1.500 0v15.500H16M1.500 10.500h4v5" stroke={W} /></Ico>,
  polar: <Ico><path d="M13.500 5A6.500 6.500 0 1 0 14 9" stroke={W} strokeWidth="1.200" /><path d="M7 9h9M7 9l6-8" stroke={W} strokeWidth="1.200" /></Ico>,
  iso: <Ico><path d="M2 1l12 14" stroke={R} /><path d="M8 0v16" stroke={G} /><circle cx="8" cy="8" r="1.300" stroke="#fff" /></Ico>,
  otrack: <Ico><path d="M15 1L1 14.500h15" stroke={W} strokeWidth="1.200" /><circle cx="8" cy="8" r="1.800" fill={W} /></Ico>,
  osnap: <Ico crisp><path d="M6 3.500h9.500v12H2.500V6M.5 .500h4v4h-4z" stroke="#fff" /></Ico>,
  annoVis: <Ico><g transform="translate(-2 0)"><AnnoA c="#fff" /></g><circle cx="13.500" cy="3.500" r="2.300" stroke="#fff" /></Ico>,
  annoAuto: <Ico><g transform="translate(-2 0)"><AnnoA /></g><path d="M14 0l-4 5h2l-2 5 6-6h-2z" fill={W} /></Ico>,
  anno: <Ico><AnnoA /></Ico>,
  gear: <Ico><circle cx="8" cy="8" r="4" stroke={W} strokeWidth="3.500" /><path d="M8 0v3M8 13v3M0 8h3M13 8h3M2.500 2.500l2 2M11.500 11.500l2 2M13.500 2.500l-2 2M4.500 11.500l-2 2" stroke={W} strokeWidth="2.600" /></Ico>,
  isolate: <Ico><path d="M1.500 .500h5v5h-5zM7 10.500L9.500 15.500h-5z" stroke={W} /><circle cx="12.500" cy="7" r="3" stroke={W} /></Ico>,
  graphics: <Ico w={18} h={18}><path d="M1 0h9l4 4v9H1z" fill="#3475c4" /><path d="M1 10h4v3h5l2 3H1z" fill="#f6b628" /><path d="M6 1v9M2 6h9" stroke="#fff" /><path d="M9 14l2.500 2.500L17 11" stroke="#46c96a" strokeWidth="2" /></Ico>,
  clean: <Ico><path d="M.5 2.500h15v11H.500z" stroke={W} /><path d="M9 5h4v4M7 11H3V7" stroke={W} /><path d="M13 5l-3 3M3 11l3-3" stroke={W} /></Ico>,
};
function St({ name, icon, on, className = "w-6" }) {
  return (
    <button aria-label={name} className={`flex h-full items-center justify-center ${on ? "bg-[#5e8ec2]" : ""} ${className}`}>{icon}</button>
  );
}
const StGroup = ({ children }) => <div className="flex h-6 items-center bg-[#3b4453]">{children}</div>;

function StatusBar() {
  const tri = <Ico w={7} h={4}><path d="M0 0h7L3.500 4z" fill={W} /></Ico>;
  return (
    <footer className="flex h-[29px] shrink-0 justify-between text-[#f2f3f5]">
      <div className="flex h-6 items-center">
        <button aria-label="Layout menu" className="ml-4"><Menu /></button>
        <button className={`ml-[9px] h-6 bg-[#3b4453] px-[18px] pt-[2px] text-[12px] font-bold ${tabShape}`}>Model</button>
        <button className="ml-[7px] pt-[2px]">Layout1</button>
        <span className="ml-[9px]"><Slash /></span>
        <button className="ml-[9px] pt-[2px]">Layout2</button>
        <span className="ml-[9px]"><Slash /></span>
        <button aria-label="New layout" className="ml-[9px]"><PlusIcon /></button>
        <span className="ml-[11px]"><Slash /></span>
      </div>
      <div className="flex gap-[3px] pt-[2px]">
        <StGroup><button className="w-[47px] text-center text-[12px]">MODEL</button></StGroup>
        <StGroup><St name="Grid" icon={stat.grid} /><St name="Snap" icon={stat.snap} /><St name="Snap options" icon={tri} className="w-4" /></StGroup>
        <StGroup><St name="Ortho" icon={stat.ortho} /><St name="Polar tracking" icon={stat.polar} /><St name="Polar options" icon={tri} className="w-4" /><St name="Isometric drafting" icon={stat.iso} /><St name="Isometric options" icon={tri} className="w-4" /></StGroup>
        <StGroup><St name="Object snap tracking" icon={stat.otrack} /><St name="Object snap" icon={stat.osnap} on className="w-[22px]" /><St name="Object snap options" icon={tri} className="w-4" /></StGroup>
        <StGroup><St name="Annotation visibility" icon={stat.annoVis} on className="w-[23px]" /><St name="Automatic scale" icon={stat.annoAuto} /><St name="Annotation scale" icon={stat.anno} /><button className="flex w-[35px] items-center justify-between pl-1 pr-[4px]">1:1{tri}</button></StGroup>
        <StGroup><St name="Workspace" icon={stat.gear} /><St name="Workspace options" icon={tri} className="w-4" /></StGroup>
        <StGroup><St name="Annotation monitor" icon={<PlusIcon />} /></StGroup>
        <StGroup><St name="Isolate objects" icon={stat.isolate} /></StGroup>
        <StGroup><St name="Graphics performance" icon={stat.graphics} className="w-[29px]" /></StGroup>
        <StGroup><St name="Clean screen" icon={stat.clean} /></StGroup>
        <StGroup><St name="Customization" icon={<Menu />} className="w-6" /></StGroup>
      </div>
    </footer>
  );
}

export default function App() {
  return (
    <div className="flex h-screen flex-col overflow-hidden bg-[#222933] font-['Noto_Sans','Open_Sans',sans-serif] text-[11px] leading-4">
      <TitleBar />
      <RibbonTabs />
      <Ribbon />
      <FileTabs />
      <div className="h-1 shrink-0 bg-[#3b4453]" />
      <Canvas />
      <div className="h-1 shrink-0 bg-[#3b4453]" />
      <StatusBar />
      <div className="h-[2px] shrink-0 bg-[#323232]" />
    </div>
  );
}
